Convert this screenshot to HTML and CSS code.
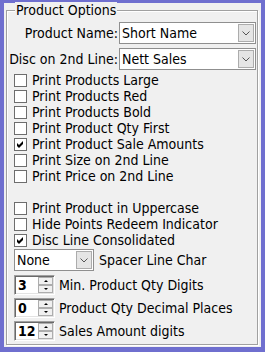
FILE: index.html
```html
<!DOCTYPE html>
<html>
<head>
<meta charset="utf-8">
<link rel="stylesheet" href="styles.css">
</head>
<body>
<div class="window">
  <div class="group">
    <span class="legend">Product Options</span>
    <div class="form">
      <span class="lbl">Product Name:</span>
      <div class="combo"><span class="val">Short Name</span><span class="btn"><svg width="8" height="5" viewBox="0 0 8 5"><path d="M0.5 0.5 L4 4 L7.5 0.5" fill="none" stroke="#555" stroke-width="1"/></svg></span></div>
      <span class="lbl">Disc on 2nd Line:</span>
      <div class="combo"><span class="val">Nett Sales</span><span class="btn"><svg width="8" height="5" viewBox="0 0 8 5"><path d="M0.5 0.5 L4 4 L7.5 0.5" fill="none" stroke="#555" stroke-width="1"/></svg></span></div>
    </div>
    <ul class="checks">
      <li><span class="box"></span>Print Products Large</li>
      <li><span class="box"></span>Print Products Red</li>
      <li><span class="box"></span>Print Products Bold</li>
      <li><span class="box"></span>Print Product Qty First</li>
      <li><span class="box"><svg width="11" height="11" viewBox="0 0 11 11"><path d="M2 4 L4 6 L8 2 L8 5 L4 9 L2 7 Z" fill="#000"/></svg></span>Print Product Sale Amounts</li>
      <li><span class="box"></span>Print Size on 2nd Line</li>
      <li><span class="box"></span>Print Price on 2nd Line</li>
      <li class="empty"></li>
      <li><span class="box"></span>Print Product in Uppercase</li>
      <li><span class="box"></span>Hide Points Redeem Indicator</li>
      <li><span class="box"><svg width="11" height="11" viewBox="0 0 11 11"><path d="M2 4 L4 6 L8 2 L8 5 L4 9 L2 7 Z" fill="#000"/></svg></span>Disc Line Consolidated</li>
    </ul>
    <div class="row spacer-row">
      <div class="combo small"><span class="val">None</span><span class="btn"><svg width="8" height="5" viewBox="0 0 8 5"><path d="M0.5 0.5 L4 4 L7.5 0.5" fill="none" stroke="#555" stroke-width="1"/></svg></span></div>
      <span class="rlbl">Spacer Line Char</span>
    </div>
    <div class="row spin-row">
      <div class="spin"><span class="num">3</span><span class="arrows"><span class="up"></span><span class="down"></span></span></div>
      <span class="rlbl">Min. Product Qty Digits</span>
    </div>
    <div class="row spin-row">
      <div class="spin"><span class="num">0</span><span class="arrows"><span class="up"></span><span class="down"></span></span></div>
      <span class="rlbl">Product Qty Decimal Places</span>
    </div>
    <div class="row spin-row">
      <div class="spin"><span class="num">12</span><span class="arrows"><span class="up"></span><span class="down"></span></span></div>
      <span class="rlbl">Sales Amount digits</span>
    </div>
  </div>
</div>
</body>
</html>
```

FILE: styles.css
```css
html, body {
  margin: 0;
  padding: 0;
}
body {
  width: 265px;
  height: 352px;
  background: #6f6fcf;
  font-family: "DejaVu Sans Condensed", "DejaVu Sans", sans-serif;
  font-stretch: condensed;
  font-size: 14px;
  color: #000;
  overflow: hidden;
}
.window {
  margin: 3px 4px 0 4px;
  width: 257px;
  height: 344px;
  box-sizing: border-box;
  background: #f0f0f0;
  padding: 7px 2px 2px 2px;
}
.group {
  position: relative;
  box-sizing: border-box;
  height: 335px;
  width: 252px;
  border: 1px solid #a0a0a0;
  box-shadow: 1px 1px 0 #fff, inset 1px 1px 0 #fff;
}
.legend {
  position: absolute;
  top: -9px;
  left: 8px;
  padding: 0 1px;
  line-height: 16px;
  background: #f0f0f0;
}
.form {
  display: grid;
  grid-template-columns: 112px 137px;
  grid-auto-rows: 22px;
  row-gap: 4px;
  margin-top: 11px;
  align-items: center;
}
.lbl {
  text-align: right;
  padding-right: 1px;
  white-space: nowrap;
}
.combo {
  box-sizing: border-box;
  height: 22px;
  border: 1px solid #8f8f8f;
  background: #fff;
  display: flex;
  align-items: center;
  justify-content: space-between;
  padding: 0 1px 0 2px;
}
.combo .btn {
  box-sizing: border-box;
  width: 16px;
  height: 18px;
  background: #e5e5e5;
  border: 1px solid #acacac;
  display: flex;
  align-items: center;
  justify-content: center;
}
.checks {
  list-style: none;
  margin: 2px 0 0 0;
  padding: 0 0 0 7px;
}
.checks li {
  height: 16px;
  display: flex;
  align-items: flex-start;
  line-height: 16px;
  white-space: nowrap;
}
.box {
  box-sizing: border-box;
  width: 13px;
  height: 13px;
  margin-top: 2px;
  margin-right: 5px;
  border: 1px solid #6d6d6d;
  background: #fff;
  display: flex;
}
.row {
  display: flex;
  align-items: center;
  padding-left: 7px;
  white-space: nowrap;
}
.spacer-row {
  margin-top: 1px;
}
.combo.small {
  width: 80px;
  margin-right: 5px;
}
.spin-row {
  margin-top: 3px;
}
.spacer-row + .spin-row {
  margin-top: 4px;
}
.spin {
  box-sizing: border-box;
  width: 41px;
  height: 20px;
  margin-right: 4px;
  background: #fff;
  border-top: 1px solid #a0a0a0;
  border-left: 1px solid #a0a0a0;
  border-right: 1px solid #fff;
  border-bottom: 1px solid #fff;
  box-shadow: inset 1px 1px 0 #696969, inset -1px -1px 0 #e3e3e3;
  display: flex;
  align-items: center;
  justify-content: space-between;
  padding: 0 1px 0 3px;
}
.num {
  font-weight: bold;
}
.arrows {
  display: flex;
  flex-direction: column;
  width: 15px;
}
.arrows span {
  box-sizing: border-box;
  height: 8px;
  background: #f0f0f0;
  border: 1px solid #adadad;
  position: relative;
}
.arrows .up::after,
.arrows .down::after {
  content: "";
  position: absolute;
  left: 5px;
  width: 0;
  height: 0;
  border-left: 2px solid transparent;
  border-right: 2px solid transparent;
}
.arrows .up::after {
  top: 2px;
  border-bottom: 2px solid #000;
}
.arrows .down::after {
  top: 2px;
  border-top: 2px solid #000;
}
```
